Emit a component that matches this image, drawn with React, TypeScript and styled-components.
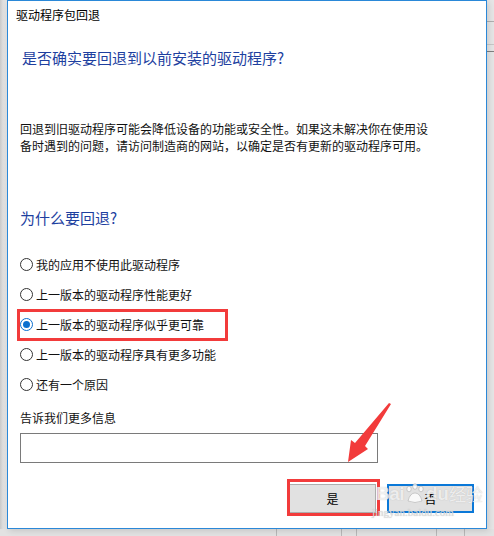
import React from "react";
import styled, { createGlobalStyle } from "styled-components";

const Global = createGlobalStyle`
  html, body { margin: 0; padding: 0; }
  body {
    width: 494px; height: 536px; overflow: hidden;
    font-family: "Noto Sans CJK SC", "Noto Sans", sans-serif;
    background: #e4e4e4;
  }
`;

const Desktop = styled.div`
  position: relative;
  width: 494px;
  height: 536px;
  display: flex;
  align-items: flex-start;
  background:
    linear-gradient(to right, #c9c9c9 0px, #dedede 3px, #e3e3e3 7px, transparent 7px),
    #e6e6e6;
  overflow: hidden;
`;

const BackStrip = styled.div`
  position: absolute;
  left: 0; right: 0; bottom: 0;
  height: 7px;
  background: #e2e2e2;
`;

const BackLine = styled.div<{ $x: number }>`
  position: absolute;
  top: 0; bottom: 0;
  left: ${(p) => p.$x}px;
  width: 1px;
  background: #b8b8b8;
`;

const BackRule = styled.div<{ $y: number; $c: string }>`
  position: absolute;
  right: 0;
  width: 7px;
  top: ${(p) => p.$y}px;
  height: 1px;
  background: ${(p) => p.$c};
`;

const Dialog = styled.div`
  position: relative;
  z-index: 1;
  margin-left: 7px;
  width: 480px;
  height: 529px;
  box-sizing: border-box;
  border: 1px solid #2a88d8;
  background: #ffffff;
  box-shadow: 2px 2px 6px rgba(0, 0, 0, 0.12);
  display: flex;
  flex-direction: column;
`;

const Title = styled.div`
  margin: 6px 0 0 8px;
  font-size: 12px;
  line-height: 16px;
  color: #000;
`;

const MainHeading = styled.div<{ $top: number; $left: number }>`
  margin: ${(p) => p.$top}px 0 0 ${(p) => p.$left}px;
  font-size: 15px;
  line-height: 20px;
  color: #1e3f9f;
`;

const Paragraph = styled.p`
  margin: 52px 0 0 12px;
  font-size: 12px;
  line-height: 17px;
  color: #111;
`;

const RadioList = styled.div`
  margin: 21px 0 0 12px;
  display: flex;
  flex-direction: column;
`;

const RadioRow = styled.label`
  height: 30px;
  display: flex;
  align-items: center;
  gap: 3px;
  font-size: 12px;
  color: #111;
`;

const RadioCircle = styled.span<{ $checked?: boolean }>`
  width: 13px;
  height: 13px;
  box-sizing: border-box;
  border-radius: 50%;
  border: 1px solid ${(p) => (p.$checked ? "#0a6fcf" : "#333")};
  display: flex;
  align-items: center;
  justify-content: center;
  background: #fff;
  &::after {
    content: "";
    width: 7px;
    height: 7px;
    border-radius: 50%;
    background: ${(p) => (p.$checked ? "#0a6fcf" : "transparent")};
  }
`;

const Label = styled.div`
  margin: 11px 0 0 12px;
  font-size: 12px;
  line-height: 16px;
  color: #111;
`;

const TextBox = styled.div`
  margin: 7px 0 0 12px;
  width: 358px;
  height: 30px;
  box-sizing: border-box;
  border: 1px solid #7a7a7a;
  background: #fff;
`;

const ButtonRow = styled.div`
  margin: 21px 12px 0 0;
  display: flex;
  justify-content: flex-end;
  gap: 11px;
`;

const Button = styled.div<{ $default?: boolean }>`
  position: relative;
  width: 87px;
  height: 29px;
  box-sizing: border-box;
  border: ${(p) => (p.$default ? "2px solid #0a78d8" : "1px solid #adadad")};
  background: #e1e1e1;
  display: flex;
  align-items: center;
  justify-content: center;
  font-size: 12px;
  color: #000;
`;

const Highlight = styled.div<{ $x: number; $y: number; $w: number; $h: number }>`
  position: absolute;
  z-index: 3;
  left: ${(p) => p.$x}px;
  top: ${(p) => p.$y}px;
  width: ${(p) => p.$w}px;
  height: ${(p) => p.$h}px;
  box-sizing: border-box;
  border: 3px solid #f23b3b;
  pointer-events: none;
`;

const Overlay = styled.svg`
  position: absolute;
  z-index: 4;
  left: 0;
  top: 0;
  pointer-events: none;
`;

const Watermark = styled.div`
  position: absolute;
  z-index: 5;
  left: 376px;
  top: 482px;
  display: flex;
  flex-direction: column;
  align-items: flex-start;
  pointer-events: none;
  color: rgba(255, 255, 255, 0.75);
  text-shadow: 0 0 1px rgba(150, 150, 150, 0.6);
`;

const WmMain = styled.div`
  display: flex;
  align-items: center;
  font-family: "Liberation Sans", Arial, sans-serif;
  font-size: 19px;
  font-weight: bold;
  line-height: 24px;
  letter-spacing: -0.5px;
`;

const WmCn = styled.span`
  font-family: "Noto Sans CJK SC", sans-serif;
  font-size: 17px;
  font-weight: normal;
  margin-left: 1px;
`;

const WmUrl = styled.div`
  margin-left: -4px;
  font-family: "Liberation Serif", serif;
  font-size: 11px;
  line-height: 13px;
  color: rgba(225, 225, 225, 0.9);
`;

const options = [
  "我的应用不使用此驱动程序",
  "上一版本的驱动程序性能更好",
  "上一版本的驱动程序似乎更可靠",
  "上一版本的驱动程序具有更多功能",
  "还有一个原因",
];

export default function App() {
  return (
    <>
      <Global />
      <Desktop>
        <BackRule $y={21} $c="#b0b0b0" />
        <BackRule $y={44} $c="#c8c8c8" />
        <BackRule $y={51} $c="#808080" />
        <BackStrip>
          <BackLine $x={276} />
          <BackLine $x={341} />
          <BackLine $x={356} />
          <BackLine $x={436} />
          <BackLine $x={464} />
        </BackStrip>
        <Dialog>
          <Title>驱动程序包回退</Title>
          <MainHeading $top={25} $left={14}>
            是否确实要回退到以前安装的驱动程序?
          </MainHeading>
          <Paragraph>
            回退到旧驱动程序可能会降低设备的功能或安全性。如果这未解决你在使用设
            <br />
            备时遇到的问题，请访问制造商的网站，以确定是否有更新的驱动程序可用。
          </Paragraph>
          <MainHeading $top={54} $left={12}>
            为什么要回退?
          </MainHeading>
          <RadioList>
            {options.map((o, i) => (
              <RadioRow key={o}>
                <RadioCircle $checked={i === 2} />
                {o}
              </RadioRow>
            ))}
          </RadioList>
          <Label>告诉我们更多信息</Label>
          <TextBox />
          <ButtonRow>
            <Button>是</Button>
            <Button $default>否</Button>
          </ButtonRow>
        </Dialog>
        <Highlight $x={17} $y={309} $w={211} $h={32} />
        <Highlight $x={287} $y={479} $w={93} $h={37} />
        <Overlay width="494" height="536" viewBox="0 0 494 536">
          <polygon
            points="391,404 365,446 368,449 348,462 351,440 355,443 389,403"
            fill="#f23b3b"
          />
        </Overlay>
        <Watermark>
          <WmMain>
            Bai
            <svg width="22" height="22" viewBox="0 0 22 22">
              <g fill="rgba(255,255,255,0.8)" stroke="rgba(170,170,170,0.7)" strokeWidth="0.8">
                <ellipse cx="5" cy="6" rx="2.2" ry="2.8" />
                <ellipse cx="11" cy="3.5" rx="2.2" ry="2.8" />
                <ellipse cx="17" cy="6" rx="2.2" ry="2.8" />
                <path d="M4 18 Q6 10 11 10 Q16 10 18 18 Q11 21 4 18 Z" />
              </g>
            </svg>
            du<WmCn>经验</WmCn>
          </WmMain>
          <WmUrl>jingyan.baidu.com</WmUrl>
        </Watermark>
      </Desktop>
    </>
  );
}
